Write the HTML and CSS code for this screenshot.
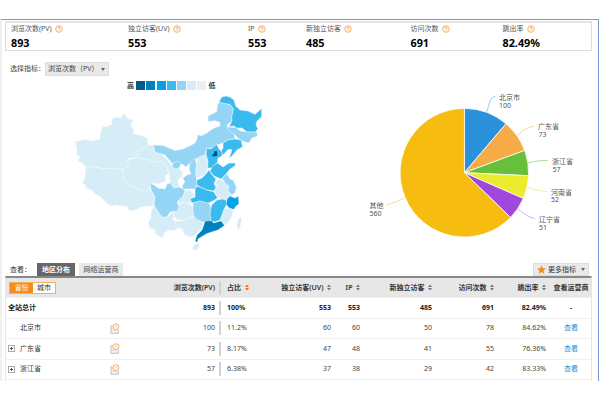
FILE: index.html
```
<!DOCTYPE html>
<html lang="zh-CN">
<head>
<meta charset="utf-8">
<title>地区分布</title>
<link rel="stylesheet" href="styles.css">
</head>
<body>
<svg class="defs" width="0" height="0">
  <symbol id="help" viewBox="0 0 8 8"><circle cx="4" cy="4" r="3.3" fill="#fffaf0" stroke="#f7aa4c" stroke-width=".9"/><path d="M2.9 3.2Q3 2.2 4 2.2T5.1 3.2Q5.1 3.8 4.1 4.3V4.8M4.1 5.4V6" fill="none" stroke="#f5a03c" stroke-width=".8"/></symbol>
  <symbol id="sort" viewBox="0 0 4 7"><path d="M0 3L2 .4 4 3ZM0 4L2 6.6 4 4Z" /></symbol>
  <symbol id="trend" viewBox="0 0 10 11"><path d="M1 2V10.3H8.3V7" fill="#f3f3f3" stroke="#bbb" stroke-width=".9"/><path d="M2.5 8L4 6.5 6 8" fill="none" stroke="#c4c4c4" stroke-width=".7"/><circle cx="5.8" cy="3.7" r="3" fill="#fff8ee" stroke="#f8ab70" stroke-width="1"/><path d="M5.8 2.2V4H7" fill="none" stroke="#f8b27b" stroke-width=".6"/></symbol>
</svg>
<div class="page">
  <section class="summary">
    <div class="stat"><span class="label">浏览次数(PV)<svg><use href="#help"/></svg></span><b>893</b></div>
    <div class="stat"><span class="label">独立访客(UV)<svg><use href="#help"/></svg></span><b>553</b></div>
    <div class="stat"><span class="label">IP<svg><use href="#help"/></svg></span><b>553</b></div>
    <div class="stat"><span class="label">新独立访客<svg><use href="#help"/></svg></span><b>485</b></div>
    <div class="stat"><span class="label">访问次数<svg><use href="#help"/></svg></span><b>691</b></div>
    <div class="stat"><span class="label">跳出率<svg><use href="#help"/></svg></span><b>82.49%</b></div>
  </section>

  <div class="picker"><span>选择指标：</span><div class="select">浏览次数（PV）<i class="caret"></i></div></div>

  <section class="charts">
    <div class="map-col">
      <div class="legend"><b>高</b><i class="c1"></i><i class="c2"></i><i class="c3"></i><i class="c4"></i><i class="c5"></i><i class="c6"></i><i class="c7"></i><b>低</b></div>
      <svg class="map" viewBox="5 92 300 166">
        <g class="lv6">
          <path d="M75 142L78 141 85 139.5 92 141 100 139 100.5 133 102.3 127 107 126.5 111.7 124.3 112 119 115 117.3 121 118 122 115 125 114.3 128 119 132.7 120 131 126 134 130 133 134 140 135 147.3 138.3 148.3 145 144 148 138.3 151.5 136.7 157.7 130 158 127 160 129 163 126.7 167.3 122.7 169.3 113 168 104 169 95 167 86 167.3 83 163 78 161 80 157 76.700 154 77 148Z"/>
          <path d="M86 167.300L95 167 104 169 113 168 122.700 169.300 124 175 123.500 180 129 185 135 187.300 144 191 150 189 154.700 198.300 152.700 206.700 146 206 140 207.300 136 210 130 211 127 207 122 206 116.700 205 111 206 106.700 203.300 101 197 95 194 91.700 190 86 188 85 184 82 183 85 178 85 173Z"/>
          <path d="M122.700 169.300L126.700 167.300 129 163 127 160 136.700 157.700 144 159 150 160 155 162 160 161 166 166 169 173 165 176 166 181 158 184 152 183 148 191 144 191 135 187.300 129 185 123.500 180 124 175Z"/>
          <path d="M148.300 145L153 145 155 152 161 154 165 158 168 160 171 165 175 169 179 166 180 170 183 172 182 177 178 180 179 187 174 188 170 183 169 173 166 166 160 161 155 162 150 160 144 159 136.700 157.700 138.300 151.500 144 148Z"/>
          <path d="M198 157L206.500 154 207.500 162 207.700 168 205 175 196.700 178 195.500 171 196.500 163Z"/>
          <path d="M215 181L221.700 179 225 183 229 186 228 191 232 196 229 199 224 200 217 197 214 189 217 186Z"/>
          <path d="M185 191L190 190 195 195 190 199 191 204 184 202 178 204 179 200 183 196Z"/>
          <path d="M178 206L184 202 191 205 195 210 195 216 190 218 185 221 176 219 173 214Z"/>
          <path d="M154 206L157 210 162 217 168 217 172 212 174 215 173 220 177 222 178 228 174 231 169 230 164 233 163 238 158 236 155 233 155 230 150 228 148 223 151 218 151 211Z"/>
          <path d="M174 221L180 221 185 220 190 218 195 217 199 220 203 222 202 229 197 233 193 237 187 236 184 234 182 229 178 228Z"/>
          <path d="M228 208L233 210 232 216 230 220 225 225 222 221 220 221 222 213 225 208Z"/>
          <path d="M192 248L195 244 199.500 243.500 199 248 195 250.500Z"/>
          <path d="M236.700 226L238 220 240.500 217 241.700 219 240.500 226 238.500 230.500Z"/>
        </g>
        <g class="lv5">
          <path d="M153.300 145L163 145.500 175 150.500 183 149 190 145.700 195 143 197 139 197.500 134.500 201 136 206.700 133 214 128 220 126 220 122.500 215 120.700 208.300 121.700 208 116 216.700 111.700 217.700 104.300 220 101.700 224 103.500 230 104.300 233.500 109 231.700 116.700 232 121 227 125 229 131 234 133 235 139 228 140 223 143 216.700 145 213 148 206.700 148.300 205 155 199 157 196 159 194 164 190 163 186 167 182 164 175 166 171 162 165 155 155 152Z"/>
          <path d="M227 127L236.700 127.700 240 131 246.700 131.700 257 132 257.500 136 252 138 249 143 242 141 238 138 234 134 229 131Z"/>
          <path d="M173 163L178 161 181 164 179 168 175 169 172 166Z"/>
          <path d="M190 163L195 158 196.500 164 195.500 171 196.700 180 197 184 195 189 183 189 182 186 185 182 182.700 178 187 175 191 174 189 169Z"/>
          <path d="M150 183L154 185 158 188 165 189 167 184 170 183 174 188 179 187 185 190 183 196 177 202 179 207 177 211 170 212 167 217 162 217 157 210 154 205 155 197 151 190Z"/>
          <path d="M222 178L227 174 230 179 233 180 236.500 187 235 193 232 195 228 191 229 186 225 183Z"/>
          <path d="M193 203L200 201 209 203 211 208 210 214 211 221 206 222 203 222 196 219 194 216 193 211Z"/>
        </g>
        <g class="lv4">
          <path d="M219 102L221.700 97 226 96 230 97 234 100 235.700 106 240 110 248 111 255 114.300 261.700 108.500 261.700 116.700 257 121 256 125 258 129 255 132 246.700 131.700 242 128 236.700 128 234 126 229 126.500 232 121 231.700 116.700 233.500 109 230 104.300 224 103.500Z"/>
          <path d="M223 143L228 140 235 139 241 140 242.700 146.700 237 150 232 156 229 158 231 153 231.700 149.500 228 149.500 223 155 220 153 223 148Z"/>
          <path d="M206.700 148.300L211 149 216.700 144.300 219 149 222 152 222 156 218 158 217.500 162 212 168 207.700 168 208 161 206 154Z"/>
          <path d="M211.700 168L214 165 217.500 163 223 167 229 163 235.700 163 235 166 230 169 226 174 221 179 214 176 210 171Z"/>
          <path d="M196.700 180L202 178 205 175 209 170 213 176 216 179 214 184 216 187 214 191 207 190 202 188 197 185Z"/>
          <path d="M195 189L197 186 202 188 207 190 214 192 217.500 198 213 201 208 203 200 201 192 203 190 199 195 197Z"/>
          <path d="M211.700 205L217 200 222 199 226 200 227 204 224 209 220 220 215 222 211 221 210 214 211 208Z"/>
        </g>
        <path class="lv3" d="M227 199L230 196 235 198 238.500 196 239 204 236 206 234 209.500 229 208 226 204Z"/>
        <path class="lv2" d="M205 221L211 220.500 214 223 221 220.700 224.500 225.500 218 230 207 233.500 198 239 197.500 242.500 195 241 197 235 202 230Z"/>
        <path class="lv1" d="M211.500 155.500L214 153.500 214.500 151 217 151.300 217.300 155.800 214 156.500Z"/>
      </svg>
    </div>
    <svg class="pie" viewBox="305 79 286 179">
      <g transform="translate(464.400 172.700)" class="slices">
        <path fill="#2c91dc" d="M0 0V-64.300A64.300 64.300 0 0 1 41.600 -49Z"/>
        <path fill="#f6ab47" d="M0 0L41.600 -49A64.300 64.300 0 0 1 60.300 -22.300Z"/>
        <path fill="#68bf39" d="M0 0L60.300 -22.300A64.300 64.300 0 0 1 64.200 3Z"/>
        <path fill="#eceb2d" d="M0 0L64.200 3A64.300 64.300 0 0 1 58.900 25.800Z"/>
        <path fill="#a048dc" d="M0 0L58.900 25.800A64.300 64.300 0 0 1 46.100 44.800Z"/>
        <path fill="#f7bc10" d="M0 0L46.100 44.800A64.300 64.300 0 1 1 0 -64.300Z"/>
      </g>
      <g class="leads">
        <path stroke="#7bbdf0" d="M486.500 112C490 103 490 97 495.500 96.300"/>
        <path stroke="#f8c48a" d="M517.500 135.500C524 130 527 127 534 126.300"/>
        <path stroke="#94d678" d="M528 163C536 161 540 160.500 548 160.300"/>
        <path stroke="#f0ee82" d="M528 187.500C536 190 540 191 547 191.500"/>
        <path stroke="#c797ee" d="M518 209C524 213 527 217 535 218.500"/>
        <path stroke="#f5cf83" d="M404.500 198C397 201 393 204 386.500 204.500"/>
      </g>
      <g class="names">
        <text x="499" y="99.700">北京市</text><text x="499" y="107.500">100</text>
        <text x="538" y="129.400">广东省</text><text x="538.500" y="137.200">73</text>
        <text x="552" y="164">浙江省</text><text x="552.500" y="171.500">57</text>
        <text x="551" y="194.700">河南省</text><text x="551" y="202.300">52</text>
        <text x="539" y="222">辽宁省</text><text x="539" y="229.500">51</text>
        <text x="369.500" y="207.500">其他</text><text x="369.500" y="215.500">560</text>
      </g>
    </svg>
  </section>

  <nav class="tabs">
    <span class="view">查看：</span><b class="tab active">地区分布</b><span class="tab">网络运营商</span>
    <div class="more"><svg viewBox="0 0 10 10"><path d="M5 .4L6.400 3.500 9.800 3.900 7.300 6.200 8 9.600 5 7.900 2 9.600 2.700 6.200 .2 3.900 3.600 3.500Z" fill="#f78c0d"/></svg>更多指标<i class="caret"></i></div>
  </nav>

  <section class="grid">
    <div class="row head">
      <div class="switch"><b>省份</b><span>城市</span></div>
      <div>浏览次数(PV)</div><div class="share">占比<svg class="hot"><use href="#sort"/></svg></div>
      <div>独立访客(UV)<svg><use href="#sort"/></svg></div><div>IP<svg><use href="#sort"/></svg></div>
      <div>新独立访客<svg><use href="#sort"/></svg></div><div>访问次数<svg><use href="#sort"/></svg></div>
      <div>跳出率<svg><use href="#sort"/></svg></div><div class="op">查看运营商</div>
    </div>
    <div class="row total"><div class="all">全站总计</div><div>893</div><div class="share">100%</div><div>553</div><div>553</div><div>485</div><div>691</div><div>82.49%</div><div class="op">-</div></div>
    <div class="row"><div class="name"><i></i>北京市</div><div><svg class="trend"><use href="#trend"/></svg>100</div><div class="share">11.2%</div><div>60</div><div>60</div><div>50</div><div>78</div><div>84.62%</div><div class="op"><a>查看</a></div></div>
    <div class="row"><div class="name"><i class="plus"></i>广东省</div><div><svg class="trend"><use href="#trend"/></svg>73</div><div class="share">8.17%</div><div>47</div><div>48</div><div>41</div><div>55</div><div>76.36%</div><div class="op"><a>查看</a></div></div>
    <div class="row"><div class="name"><i class="plus"></i>浙江省</div><div><svg class="trend"><use href="#trend"/></svg>57</div><div class="share">6.38%</div><div>37</div><div>38</div><div>29</div><div>42</div><div>83.33%</div><div class="op"><a>查看</a></div></div>
  </section>
</div>
</body>
</html>
```
FILE: styles.css
```
* { box-sizing: border-box; }
body {
  margin: 0;
  width: 600px;
  height: 400px;
  overflow: hidden;
  background: #fff;
  color: #444;
  font: 7px/10px "Noto Sans", "Noto Sans CJK SC", sans-serif;
  white-space: nowrap;
}
.defs { display: block; }
.page {
  width: 599px;
  height: 362px;
  margin-top: 19px;
  padding: 1px 7px 0 3px;
  border-top: 1px solid #6f9bd0;
  border-right: 1px solid #6f9bd0;
  border-left: 2px solid #efefef;
  overflow: hidden;
}
.summary {
  display: grid;
  grid-template-columns: 117px 120px 58px 104.500px 92px 1fr;
  width: 587px;
  height: 30px;
  padding: 1px 0 0 5px;
  border: 1px solid #ddd;
  border-top: 2px solid #e4e4e4;
}
.stat { display: flex; flex-direction: column; }
.label { display: flex; align-items: center; height: 10px; gap: 3px; color: #555; }
.label svg { width: 8px; height: 8px; }
.stat b { margin-top: 2px; font-size: 10.800px; line-height: 13px; color: #000; }

.picker { display: flex; align-items: center; height: 14px; margin: 11px 0 0 5px; }
.picker > span { width: 35px; }
.select {
  display: flex;
  align-items: center;
  width: 64px;
  height: 14px;
  padding-left: 2px;
  background: #e9e9e9;
  border: 1px solid #ddd;
}
.caret {
  margin: 0 3px 0 auto;
  border: 2px solid transparent;
  border-top: 3px solid #666;
  border-bottom: 0;
}

.charts { display: flex; width: 586px; height: 179px; margin-top: 3px; }
.map-col { width: 300px; }
.legend { display: flex; align-items: center; gap: 1.200px; height: 13px; padding-left: 122px; color: #333; }
.legend i { width: 9px; height: 9px; }
.legend b:first-child { margin-right: 1px; }
.legend b:last-child { margin-left: 1px; }
.c1 { background: #005a8a; }
.c2 { background: #0281bf; }
.c3 { background: #06a0e9; }
.c4 { background: #3bbaee; }
.c5 { background: #94d4f5; }
.c6 { background: #d6edf8; }
.c7 { background: #eee; }
.map { display: block; width: 300px; height: 166px; }
.map path { stroke: #f0f9fe; stroke-width: .5; stroke-linejoin: round; }
.map path.lv1 { stroke: none; }
.lv1 { fill: #005482; }
.lv2 { fill: #0281bf; }
.lv3 { fill: #06a0e9; }
.lv4 { fill: #3bbaee; }
.lv5 { fill: #94d4f5; }
.lv6 { fill: #d6edf8; }
.pie { width: 286px; height: 179px; }
.slices path { stroke: #fff; stroke-width: .8; }
.leads path { fill: none; stroke-width: .8; }
.names { fill: #555; font-size: 7px; }

.tabs { display: flex; align-items: center; width: 586px; height: 18px; padding-top: 5px; }
.view { width: 32px; padding-left: 5px; color: #333; }
.tab {
  width: 44px;
  height: 13px;
  margin-right: 4px;
  line-height: 13px;
  text-align: center;
  background: #e9e9e9;
}
.tab.active { width: 38px; background: #666; color: #fff; }
.more {
  display: flex;
  align-items: center;
  gap: 2px;
  width: 56px;
  height: 13px;
  margin: 0 2px 0 auto;
  padding-left: 3px;
  background: #e9e9e9;
  border: 1px solid #ddd;
  color: #333;
}
.more svg { width: 9px; height: 9px; }

.grid { width: 587px; height: 105px; border: 1px solid #e4e4e4; border-width: 0 1px; border-top: 2px solid #888; }
.row {
  display: grid;
  grid-template-columns: 103px 106px 35px 81px 29px 72px 62px 52px 45px;
  align-items: center;
  height: 20.400px;
  border-bottom: 1px solid #f0f0f0;
}
.row > div { display: flex; align-items: center; justify-content: flex-end; }
.row > .share { justify-content: flex-start; height: 14px; margin-left: 4px; padding-left: 6px; border-left: 2px solid #d2d2d2; }
.row > .op { justify-content: center; padding-left: 5px; }
.row > .name { justify-content: flex-start; padding-left: 2px; color: #333; }
.row > .all { justify-content: flex-start; padding-left: 2px; }
.name i { width: 7px; height: 7px; margin-right: 5px; }
.name .plus {
  border: 1px solid #aaa;
  background: linear-gradient(#555, #555) center / 3px 1px no-repeat, linear-gradient(#555, #555) center / 1px 3px no-repeat;
}
.head { background: #e7e7e7; color: #333; font-weight: 600; }
.head svg { width: 4px; height: 7px; margin-left: 3.500px; fill: #777; }
.head .hot { fill: #f76b1c; }
.total { color: #222; font-weight: 700; }
.row .trend { width: 10px; height: 11px; margin-right: auto; margin-left: 1px; }
.row a { color: #1b8fd6; }
.row > .switch {
  justify-content: flex-start;
  width: 47px;
  height: 12px;
  margin-left: 3px;
  border: 1px solid #f5b05e;
  background: #fff;
  line-height: 10px;
  text-align: center;
}
.switch b { width: 23px; background: #f78c1c; color: #fff; font-weight: 400; }
.switch span { width: 22px; font-weight: 400; }
```
